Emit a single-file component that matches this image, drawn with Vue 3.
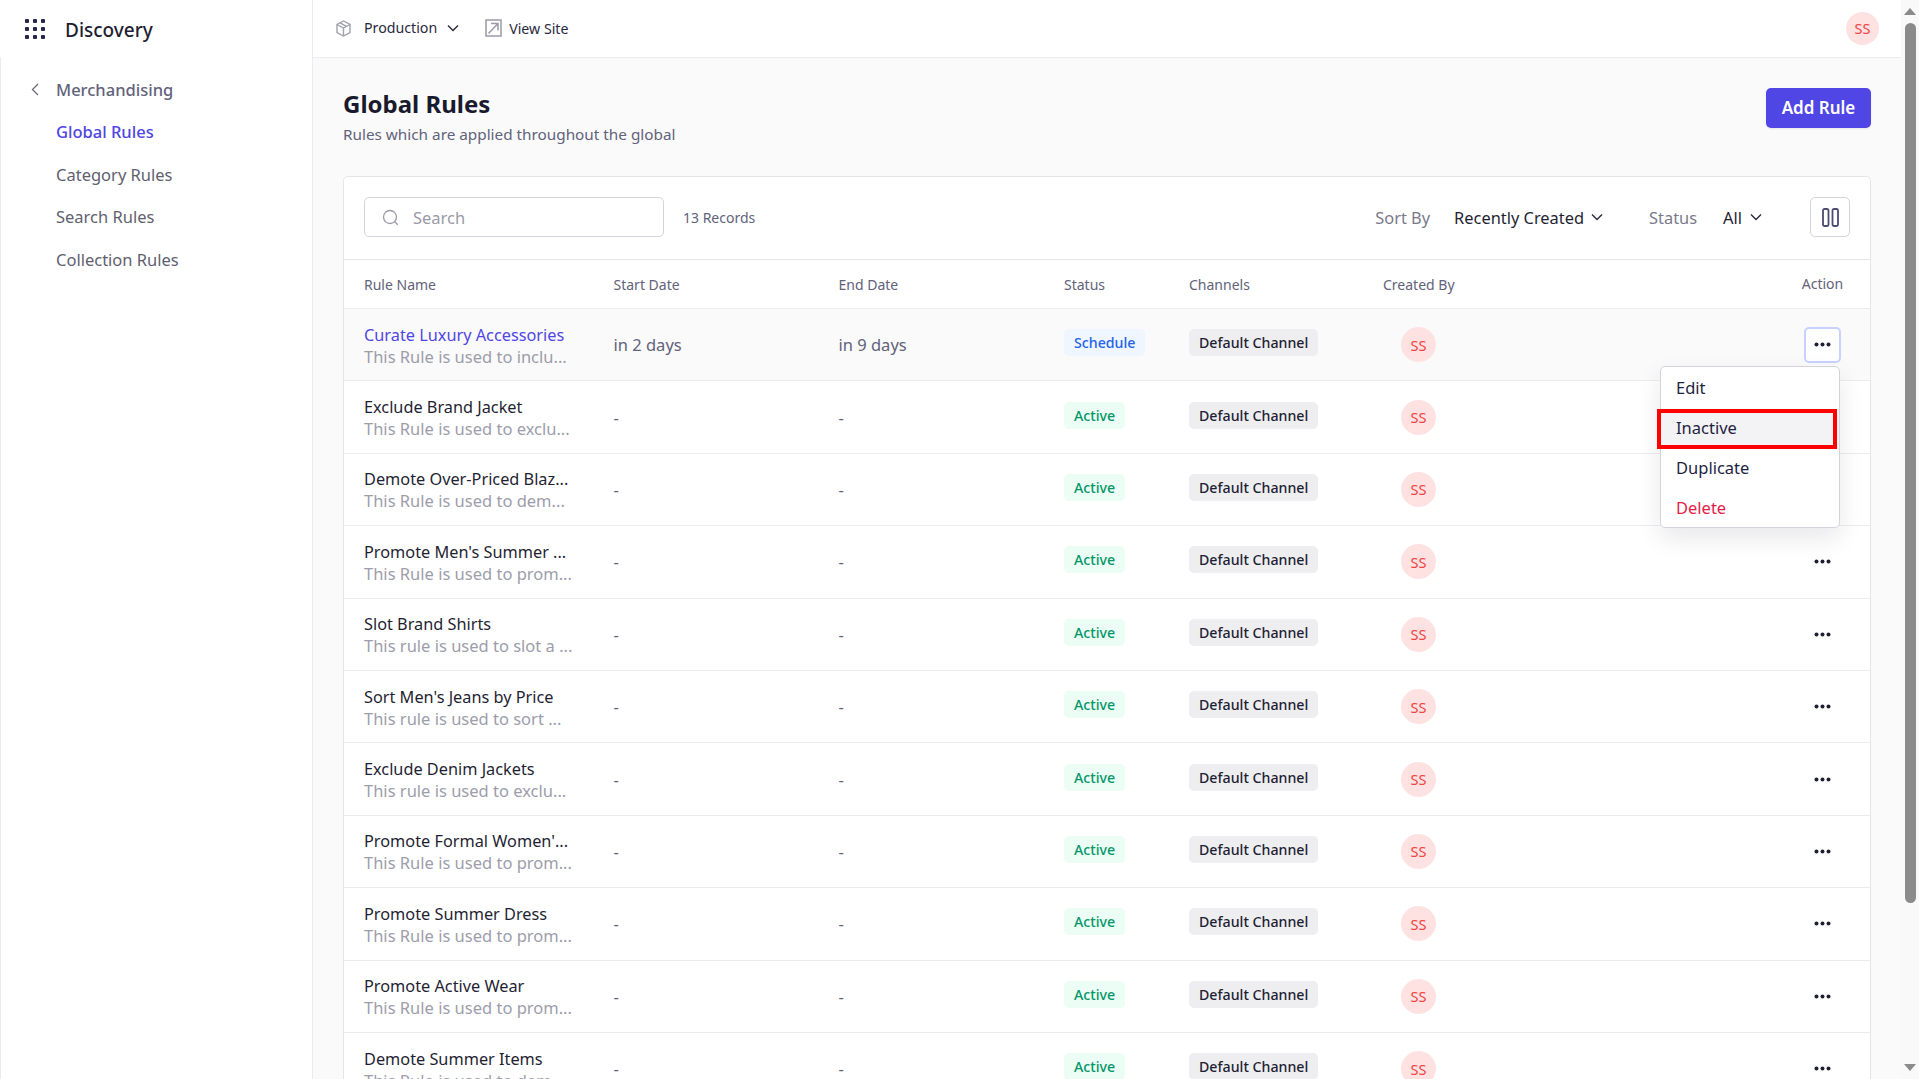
<script setup>
const rows = [
  { name: 'Curate Luxury Accessories', desc: 'This Rule is used to inclu...', start: 'in 2 days', end: 'in 9 days', status: 'Schedule', open: true },
  { name: 'Exclude Brand Jacket', desc: 'This Rule is used to exclu...', start: '-', end: '-', status: 'Active' },
  { name: 'Demote Over-Priced Blaz...', desc: 'This Rule is used to dem...', start: '-', end: '-', status: 'Active' },
  { name: "Promote Men's Summer ...", desc: 'This Rule is used to prom...', start: '-', end: '-', status: 'Active' },
  { name: 'Slot Brand Shirts', desc: 'This rule is used to slot a ...', start: '-', end: '-', status: 'Active' },
  { name: "Sort Men's Jeans by Price", desc: 'This rule is used to sort ...', start: '-', end: '-', status: 'Active' },
  { name: 'Exclude Denim Jackets', desc: 'This rule is used to exclu...', start: '-', end: '-', status: 'Active' },
  { name: "Promote Formal Women'...", desc: 'This Rule is used to prom...', start: '-', end: '-', status: 'Active' },
  { name: 'Promote Summer Dress', desc: 'This Rule is used to prom...', start: '-', end: '-', status: 'Active' },
  { name: 'Promote Active Wear', desc: 'This Rule is used to prom...', start: '-', end: '-', status: 'Active' },
  { name: 'Demote Summer Items', desc: 'This Rule is used to dem...', start: '-', end: '-', status: 'Active' },
]
const nav = ['Global Rules', 'Category Rules', 'Search Rules', 'Collection Rules']
const gridDots = [0, 1, 2].flatMap((y) => [0, 1, 2].map((x) => ({ cx: 2 + x * 8, cy: 2 + y * 8 })))
</script>

<template>
  <div class="page">
    <div class="app">
      <aside class="sidebar">
        <div class="brand">
          <svg class="grid-icon" width="20" height="20" viewBox="0 0 20 20">
            <rect v-for="(d, i) in gridDots" :key="i" :x="d.cx - 2" :y="d.cy - 2" width="4" height="4" rx="1" fill="#26264a" />
          </svg>
          <span class="brand-name">Discovery</span>
        </div>
        <div class="side-body">
          <div class="back">
            <svg width="8" height="13" viewBox="0 0 8 13" fill="none"><path d="M7 1 1.500 6.500 7 12" stroke="#6b6b7b" stroke-width="1.300" /></svg>
            <span>Merchandising</span>
          </div>
          <nav class="nav">
            <a v-for="(n, i) in nav" :key="n" class="nav-item" :class="{ active: i === 0 }">{{ n }}</a>
          </nav>
        </div>
      </aside>

      <div class="content">
        <header class="topbar">
          <svg class="box-icon" width="17" height="17" viewBox="0 0 17 17" fill="none" stroke="#a0a0ae" stroke-width="1.400">
            <path d="M8.500 1 15 4.500v8L8.500 16 2 12.500v-8L8.500 1Z" />
            <path d="M2 4.500 8.500 8 15 4.500M8.500 8v8M5 2.800l6.500 3.500" />
          </svg>
          <span class="env">Production</span>
          <svg class="chev env-chev" width="12" height="8" viewBox="0 0 12 8" fill="none"><path d="M1 1.500 6 6.500l5-5" stroke="#2a2a3e" stroke-width="1.400" /></svg>
          <svg class="ext-icon" width="17" height="18" viewBox="0 0 17 18" fill="none" stroke="#9a9aa8" stroke-width="1.500">
            <path d="M1 1h15v16H1z" />
            <path d="M3.500 14.500 13 4.500M6 4.500H13V11.500" />
          </svg>
          <span class="site">View Site</span>
          <span class="avatar top-avatar">SS</span>
        </header>

        <main class="main">
          <div class="title-row">
            <div>
              <h1>Global Rules</h1>
              <p>Rules which are applied throughout the global</p>
            </div>
            <button class="add">Add Rule</button>
          </div>

          <section class="card">
            <div class="toolbar">
              <div class="search">
                <svg width="17" height="17" viewBox="0 0 17 17" fill="none" stroke="#9a9aa8" stroke-width="1.300"><circle cx="8" cy="8" r="6.500" /><path d="m12.800 12.800 3 3" /></svg>
                <span>Search</span>
              </div>
              <span class="records">13 Records</span>
              <span class="spacer"></span>
              <span class="label sort-label">Sort By</span>
              <span class="value">Recently Created</span>
              <svg class="chev sort-chev" width="12" height="8" viewBox="0 0 12 8" fill="none"><path d="M1 1.500 6 6.500l5-5" stroke="#2a2a3e" stroke-width="1.400" /></svg>
              <span class="label status-label">Status</span>
              <span class="value all-value">All</span>
              <svg class="chev all-chev" width="12" height="8" viewBox="0 0 12 8" fill="none"><path d="M1 1.500 6 6.500l5-5" stroke="#2a2a3e" stroke-width="1.400" /></svg>
              <button class="columns">
                <svg width="17" height="19" viewBox="0 0 17 19" fill="none" stroke="#4b4b73" stroke-width="1.800"><rect x="1" y="1" width="5.500" height="17" rx="1.500" /><rect x="10.500" y="1" width="5.500" height="17" rx="1.500" /></svg>
              </button>
            </div>

            <div class="row head">
              <span>Rule Name</span>
              <span>Start Date</span>
              <span>End Date</span>
              <span>Status</span>
              <span>Channels</span>
              <span>Created By</span>
              <span></span>
              <span class="action-head">Action</span>
            </div>

            <div v-for="r in rows" :key="r.name" class="row body" :class="{ open: r.open }">
              <div class="name-cell">
                <span class="name">{{ r.name }}</span>
                <span class="desc">{{ r.desc }}</span>
              </div>
              <span class="date">{{ r.start }}</span>
              <span class="date">{{ r.end }}</span>
              <div class="tag-cell"><span class="badge" :class="r.status.toLowerCase()">{{ r.status }}</span></div>
              <div class="tag-cell"><span class="channel">Default Channel</span></div>
              <div class="creator"><span class="avatar">SS</span></div>
              <span></span>
              <div class="action">
                <button class="dots">
                  <svg width="17" height="5" viewBox="0 0 17 5" fill="#1f1f33"><circle cx="2.500" cy="2.500" r="2" /><circle cx="8.500" cy="2.500" r="2" /><circle cx="14.500" cy="2.500" r="2" /></svg>
                </button>
                <div v-if="r.open" class="menu">
                  <div class="item">Edit</div>
                  <div class="item highlighted">Inactive</div>
                  <div class="item">Duplicate</div>
                  <div class="item danger">Delete</div>
                </div>
              </div>
            </div>
          </section>
        </main>
      </div>
    </div>

    <div class="scrollbar">
      <span class="arrow up"></span>
      <span class="thumb"></span>
      <span class="track-fill"></span>
      <span class="arrow down"></span>
    </div>
  </div>
</template>

<style>
html, body { margin: 0; overflow: hidden; background: #fff; }
</style>

<style scoped>
* { box-sizing: border-box; }
.page {
  display: flex;
  width: 1919px;
  height: 1079px;
  overflow: hidden;
  font-family: "Noto Sans", "Open Sans", sans-serif;
  color: #1f1f33;
}
.app { display: flex; width: 1901px; height: 1079px; overflow: hidden; }

.sidebar { width: 313px; flex: none; border-right: 1px solid #ececf0; background: #fff; }
.brand { display: flex; align-items: center; height: 57px; padding: 0 0 0 25px; }
.grid-icon { margin-top: 1px; }
.brand-name { margin: 2px 0 0 20px; font-size: 19px; font-weight: 500; color: #1f1f33; }
.side-body { border-left: 1px solid #ececf0; height: 1022px; padding-top: 17px; }
.back { display: flex; align-items: center; height: 30px; padding-left: 30px; color: #62627a; font-size: 16.500px; font-weight: 500; }
.back span { margin-left: 17px; }
.nav { display: flex; flex-direction: column; margin-top: 7px; padding-left: 55px; }
.nav-item { height: 42.500px; line-height: 42.500px; font-size: 16.500px; color: #5f5f70; }
.nav-item.active { color: #4f46e5; font-weight: 500; }

.content { flex: 1; min-width: 0; display: flex; flex-direction: column; }
.topbar { display: flex; align-items: center; height: 58px; flex: none; background: #fff; border-bottom: 1px solid #ececf0; padding: 0 22px 1px 22px; font-size: 14.200px; color: #2a2a3e; }
.box-icon { flex: none; }
.env { margin-left: 12px; margin-top: -2px; }
.env-chev { margin-left: 10px; }
.ext-icon { margin-left: 26px; }
.site { margin-left: 7px; }
.chev { flex: none; }
.avatar { display: inline-flex; align-items: center; justify-content: center; width: 35px; height: 35px; border-radius: 50%; background: #fee2e2; color: #ef4444; font-size: 14.500px; }
.top-avatar { margin-left: auto; width: 33px; height: 33px; }

.main { flex: 1; min-height: 0; background: #fafafa; padding: 30px 30px 0; }
.title-row { display: flex; justify-content: space-between; align-items: flex-start; height: 88px; }
h1 { margin: -1px 0 0; font-size: 24px; line-height: 34px; font-weight: 700; color: #1a1a2e; }
p { margin: 1px 0 0; font-size: 15.300px; line-height: 24px; color: #62627a; }
.add { width: 105px; height: 40px; padding: 0 0 2px; border: 0; border-radius: 5px; background: #4f46e5; color: #fff; font: 600 17px "Noto Sans", sans-serif; box-shadow: 0 1px 2px rgba(0, 0, 0, 0.08); }

.card { background: #fff; border: 1px solid #e6e6ea; border-bottom: 0; border-radius: 5px 5px 0 0; }
.toolbar { display: flex; align-items: center; height: 83px; padding: 0 20px 2px 20px; border-bottom: 1px solid #e6e6ea; }
.search { display: flex; align-items: center; width: 300px; height: 40px; border: 1px solid #d4d4dc; border-radius: 5px; background: #fff; padding-left: 17px; font-size: 16.500px; color: #9a9aa8; }
.search span { margin-left: 14px; }
.records { margin-left: 19px; font-size: 14px; color: #62627a; }
.spacer { flex: 1; }
.label { font-size: 16.400px; color: #7a7a8a; }
.value { font-size: 16.400px; color: #1f1f33; margin-left: 24px; }
.all-value { margin-left: 26px; }
.sort-chev { margin-left: 7px; }
.status-label { margin-left: 46px; }
.all-chev { margin-left: 8px; }
.columns { display: flex; align-items: center; justify-content: center; width: 40px; height: 40px; margin-left: 48px; padding: 0; background: #fff; border: 1px solid #d4d4dc; border-radius: 5px; }

.row { display: grid; grid-template-columns: 249.500px 225px 225.500px 125px 194px 160px 1fr 41px; align-items: center; padding: 0 27px 0 20px; border-bottom: 1px solid #ececf0; }
.head { height: 49px; font-size: 14px; color: #62627a; }
.action-head { justify-self: center; margin-top: -2px; }
.body { height: 72.400px; background: #fff; }
.body.open { background: #fafafa; }
.name-cell { display: flex; flex-direction: column; margin-top: 2px; }
.name { font-size: 16.300px; line-height: 22px; color: #1f1f33; white-space: nowrap; }
.open .name { color: #4f46e5; }
.desc { font-size: 16.500px; line-height: 22px; color: #9d9dab; white-space: nowrap; }
.date { font-size: 16.500px; color: #62627a; }
.tag-cell { display: flex; margin-bottom: 4px; }
.badge { display: inline-flex; align-items: center; height: 27px; padding: 0 10px; border-radius: 5px; font-size: 14.200px; font-weight: 500; }
.badge.active { background: #ecfdf5; color: #059669; }
.badge.schedule { background: #eff6ff; color: #2563eb; }
.channel { display: inline-flex; align-items: center; height: 27px; padding: 0 10px; border-radius: 5px; background: #eeeef1; font-size: 14.200px; font-weight: 500; color: #1f1f33; white-space: nowrap; }
.creator { padding-left: 18px; display: flex; }
.action { position: relative; display: flex; justify-content: center; }
.dots { display: flex; align-items: center; justify-content: center; width: 37px; height: 36px; padding: 0; border: 2px solid transparent; border-radius: 5px; background: transparent; }
.open .dots { border-color: #c7d2fe; background: #fff; }
.menu { position: absolute; z-index: 5; top: 39px; right: 3px; width: 180px; height: 162px; padding: 2px 0; background: #fff; border: 1px solid #d4d4dc; border-radius: 5px; box-shadow: 0 10px 25px rgba(30, 30, 60, 0.1); }
.item { position: relative; height: 40px; line-height: 37px; padding-left: 15px; font-size: 16.500px; color: #1f1f3f; }
.item.highlighted { background: #f3f3f6; }
.item.highlighted::after { content: ""; position: absolute; left: -4px; right: 2px; top: 0; bottom: 0; border: 4px solid #f00; }
.item.danger { color: #e11d48; }

.scrollbar { position: relative; width: 18px; height: 1079px; flex: none; background: #f9f9f9; display: flex; flex-direction: column; align-items: center; }
.arrow { width: 0; height: 0; border-left: 6.500px solid transparent; border-right: 6.500px solid transparent; }
.arrow.up { margin-top: 8px; border-bottom: 7px solid #8a8a8a; }
.arrow.down { margin-bottom: 8px; border-top: 7px solid #8a8a8a; }
.thumb { width: 11px; height: 880px; margin-top: 8px; border-radius: 6px; background: #8b8b8b; }
.track-fill { flex: 1; }
</style>
